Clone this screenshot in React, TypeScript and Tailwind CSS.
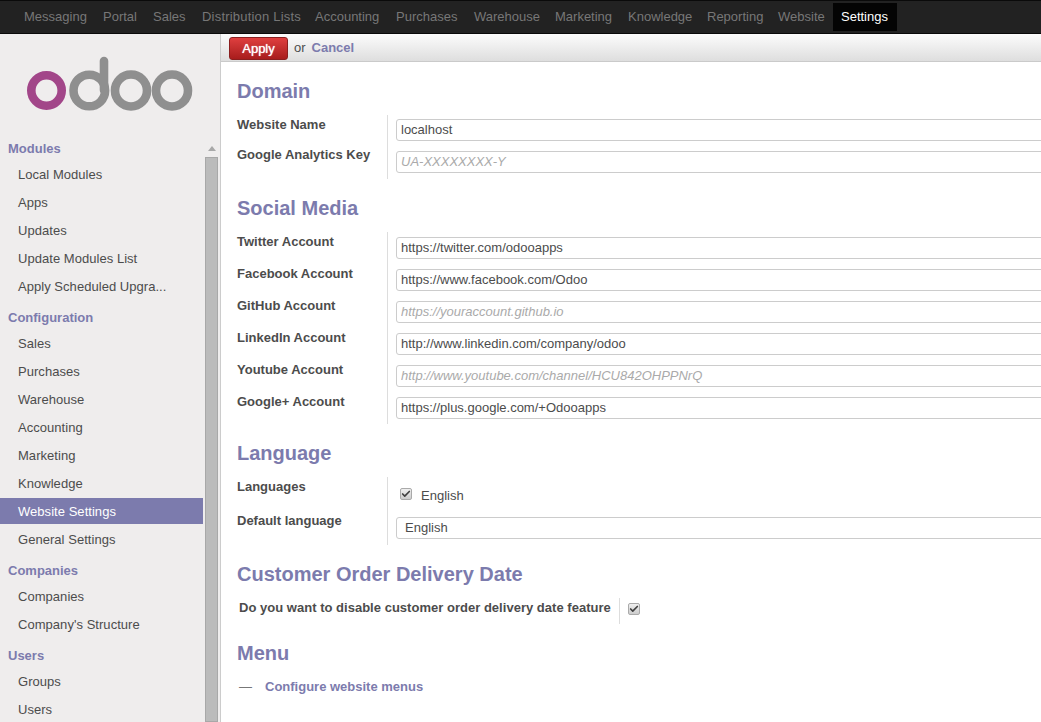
import { Check } from 'lucide-react';

const topMenu = [
  { label: 'Messaging', width: 'w-[79px]' },
  { label: 'Portal', width: 'w-[50px]' },
  { label: 'Sales', width: 'w-[49px]' },
  { label: 'Distribution Lists', width: 'w-[113px] tracking-[0.2px]' },
  { label: 'Accounting', width: 'w-[81px]' },
  { label: 'Purchases', width: 'w-[78px]' },
  { label: 'Warehouse', width: 'w-[81px]' },
  { label: 'Marketing', width: 'w-[73px]' },
  { label: 'Knowledge', width: 'w-[79px]' },
  { label: 'Reporting', width: 'w-[71px]' },
  { label: 'Website', width: 'w-[63px]' },
];

const sideMenu = [
  { title: 'Modules', items: ['Local Modules', 'Apps', 'Updates', 'Update Modules List', 'Apply Scheduled Upgra...'] },
  { title: 'Configuration', items: ['Sales', 'Purchases', 'Warehouse', 'Accounting', 'Marketing', 'Knowledge', 'Website Settings', 'General Settings'] },
  { title: 'Companies', items: ['Companies', "Company's Structure"] },
  { title: 'Users', items: ['Groups', 'Users'] },
];

const socialRows = [
  { label: 'Twitter Account', value: 'https://twitter.com/odooapps' },
  { label: 'Facebook Account', value: 'https://www.facebook.com/Odoo' },
  { label: 'GitHub Account', placeholder: 'https://youraccount.github.io' },
  { label: 'LinkedIn Account', value: 'http://www.linkedin.com/company/odoo' },
  { label: 'Youtube Account', placeholder: 'http://www.youtube.com/channel/HCU842OHPPNrQ' },
  { label: 'Google+ Account', value: 'https://plus.google.com/+Odooapps' },
];

const Logo = () => (
  <svg width="220" height="100" viewBox="0 0 220 100" className="block" fill="none">
    <g transform="translate(0,-34)">
      <circle cx="46.5" cy="90.5" r="15.2" stroke="#a24689" strokeWidth="8.6" />
      <g stroke="#8f8f8f" strokeWidth="8.6">
        <circle cx="89.3" cy="90.5" r="15.8" />
        <path d="M104 90V61" strokeLinecap="round" />
        <circle cx="131" cy="90.5" r="16" />
        <circle cx="172" cy="90.5" r="16" />
      </g>
    </g>
  </svg>
);

const CheckBox = () => (
  <span className="flex h-[12px] w-[12px] shrink-0 items-center justify-center rounded-[2px] border border-[#aaaaaa] bg-gradient-to-b from-[#f0f0f0] to-[#cccccc]">
    <Check size={10} strokeWidth={4} color="#404040" />
  </span>
);

const TextField = ({ value, placeholder }: { value?: string; placeholder?: string }) => (
  <input
    readOnly
    value={value}
    placeholder={placeholder}
    className="block h-[22px] w-[700px] rounded-[3px] border border-[#cccccc] bg-white px-1 pb-[2px] text-[13px] text-[#4c4c4c] outline-none placeholder:text-[#aaaaaa] placeholder:italic"
  />
);

const Heading = ({ children, className }: { children: string; className: string }) => (
  <h2 className={`text-[20px] leading-[24px] font-bold text-[#7c7bad] ${className}`}>{children}</h2>
);

const labelClass = 'w-[150px] shrink-0 whitespace-nowrap leading-[16px] font-bold';

export default function App() {
  return (
    <div className="flex h-[722px] w-[1041px] flex-col overflow-hidden bg-white font-['Liberation_Sans',Arial,sans-serif] text-[13px] text-[#4c4c4c]">
      <nav className="flex h-[34px] shrink-0 items-center border-y border-[#0a0a0a] bg-[#222222] pl-4">
        {topMenu.map((item) => (
          <a key={item.label} className={`${item.width} shrink-0 px-2 leading-[28px] whitespace-nowrap text-[#777777]`}>{item.label}</a>
        ))}
        <a className="w-[64px] bg-[#040404] px-2 leading-[28px] text-white">Settings</a>
      </nav>

      <div className="flex min-h-0 flex-1">
        <aside className="flex w-[221px] shrink-0 flex-col border-r border-[#cccccc] bg-[#efeded]">
          <div className="h-[98px] shrink-0"><Logo /></div>
          <div className="flex min-h-0 flex-1">
            <div className="w-[203px] shrink-0">
              {sideMenu.map((group) => (
                <div key={group.title}>
                  <div className="h-[29px] pt-[9px] pl-2 text-[13px] leading-[16px] font-bold text-[#7c7bad]">{group.title}</div>
                  {group.items.map((item) => (
                    <a
                      key={item}
                      className={`mb-[2px] block h-[26px] pl-[18px] leading-[28px] tracking-[0.04px] whitespace-nowrap ${item === 'Website Settings' ? 'bg-[#7c7bad] text-white' : 'text-[#4c4c4c]'}`}
                    >
                      {item}
                    </a>
                  ))}
                </div>
              ))}
            </div>
            <div className="mt-[8px] ml-[2px] flex w-[13px] shrink-0 flex-col">
              <div className="flex h-[17px] shrink-0 items-center justify-center">
                <span className="h-0 w-0 border-x-[4px] border-b-[5px] border-x-transparent border-b-[#a8a8a8]" />
              </div>
              <div className="flex-1 border border-[#a8a8a8] bg-[#bbbbbb]" />
            </div>
          </div>
        </aside>

        <main className="min-w-0 flex-1 overflow-hidden">
          <div className="flex h-[28px] items-center border-b border-[#cacaca] bg-gradient-to-b from-[#fcfcfc] to-[#dedede] pt-px pl-2">
            <button className="h-[23px] w-[59px] rounded-[3px] border border-[#8a1f1f] bg-gradient-to-b from-[#df3f3f] to-[#a81c1c] pt-px text-[13px] leading-[20px] text-white [text-shadow:0_0_1px_#ffffff]">Apply</button>
            <span className="ml-[6px] text-[#4c4c4c]">or</span>
            <a className="ml-[6px] font-bold text-[#7c7bad]">Cancel</a>
          </div>

          <div className="pl-4">
            <Heading className="mt-[17px]">Domain</Heading>
            <div className="mt-[12px]">
              <div className="flex h-[32px]">
                <div className={`${labelClass} pt-[2px]`}>Website Name</div>
                <div className="border-l border-[#dddddd] pt-[4px] pl-2"><TextField value="localhost" /></div>
              </div>
              <div className="flex h-[32px]">
                <div className={labelClass}>Google Analytics Key</div>
                <div className="border-l border-[#dddddd] pt-[4px] pl-2"><TextField placeholder="UA-XXXXXXXX-Y" /></div>
              </div>
            </div>

            <Heading className="mt-[17px]">Social Media</Heading>
            <div className="mt-[12px]">
              {socialRows.map((row) => (
                <div key={row.label} className="flex h-[32px]">
                  <div className={`${labelClass} pt-[2px]`}>{row.label}</div>
                  <div className="border-l border-[#dddddd] pt-[5px] pl-2"><TextField value={row.value} placeholder={row.placeholder} /></div>
                </div>
              ))}
            </div>

            <Heading className="mt-[17px]">Language</Heading>
            <div className="mt-[12px]">
              <div className="flex h-[35px]">
                <div className={`${labelClass} pt-[2px]`}>Languages</div>
                <div className="flex items-start gap-[9px] self-stretch border-l border-[#dddddd] pl-3">
                  <span className="mt-[11px]"><CheckBox /></span>
                  <span className="mt-[11px] leading-[16px]">English</span>
                </div>
              </div>
              <div className="flex h-[33px]">
                <div className={`${labelClass} pt-px`}>Default language</div>
                <div className="border-l border-[#dddddd] pt-[5px] pl-2">
                  <select className="block h-[22px] w-[700px] appearance-none rounded-[3px] border border-[#cccccc] bg-white pl-2 text-[13px] text-[#4c4c4c] outline-none">
                    <option>English</option>
                  </select>
                </div>
              </div>
            </div>

            <Heading className="mt-[17px]">Customer Order Delivery Date</Heading>
            <div className="mt-[12px] flex h-[26px] pl-[2px]">
              <div className="w-[380px] shrink-0 pt-[2px] leading-[16px] font-bold tracking-[0.02px] whitespace-nowrap">Do you want to disable customer order delivery date feature</div>
              <div className="flex items-start border-l border-[#dddddd] pt-[5px] pl-2"><CheckBox /></div>
            </div>

            <Heading className="mt-[17px]">Menu</Heading>
            <div className="mt-[14px] flex items-center pl-[2px] leading-[16px]">
              <span className="w-[26px] text-[#777777]">—</span>
              <a className="font-bold text-[#7c7bad]">Configure website menus</a>
            </div>
          </div>
        </main>
      </div>
    </div>
  );
}
